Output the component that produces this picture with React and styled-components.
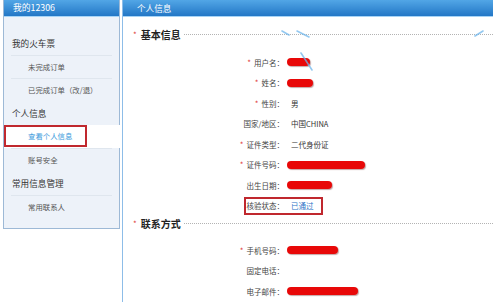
import React from 'react';
import styled, { createGlobalStyle } from 'styled-components';

const Global = createGlobalStyle`
  html, body { margin: 0; padding: 0; background: #fff; }
  body { font-family: "Noto Sans CJK SC", "Noto Sans", sans-serif; }
`;

const Page = styled.div`
  display: flex;
  align-items: flex-start;
  gap: 2px;
  padding-left: 3px;
  width: 493px;
  height: 302px;
  overflow: hidden;
  box-sizing: border-box;
`;

const Sidebar = styled.aside`
  width: 117px;
  box-sizing: border-box;
  border: 1px solid #9db9d6;
  border-top: none;
  background: #edf2f9;
  padding-bottom: 10px;
`;

const BlueBar = styled.div`
  height: 17px;
  box-sizing: border-box;
  background: linear-gradient(#52a6e6, #2377c6);
  border-bottom: 1px solid #a7d4f6;
  color: #fff;
  font-size: ${p => p.$size}px;
  line-height: 16px;
  padding-left: ${p => p.$pad}px;
  margin: 0 ${p => p.$edge || 0}px;
`;

const Nav = styled.nav`
  padding-top: 14px;
`;

const GroupTitle = styled.div`
  height: 24px;
  line-height: 24px;
  padding-left: 8px;
  font-size: 8.6px;
  color: #333;
`;

const SubItem = styled.div`
  height: 23px;
  line-height: 22px;
  margin: 0 7px;
  padding-left: 17px;
  border-top: 1px solid #dfe6ee;
  box-sizing: border-box;
  font-size: 7.4px;
  color: #555;
`;

const ActiveItem = styled.div`
  height: 23px;
  margin-right: -4px;
  background: #fff;
  display: flex;
  align-items: flex-start;
`;

const ActiveBox = styled.span`
  width: 83px;
  height: 22px;
  box-sizing: border-box;
  border: 2px solid #c0282e;
  padding-left: 22px;
  line-height: 18px;
  font-size: 7.4px;
  color: #3d9bdc;
`;

const Main = styled.main`
  flex: 1;
  height: 302px;
  border-left: 1px solid #8dbde8;
  position: relative;
`;

const SectionTitle = styled.div`
  display: flex;
  align-items: center;
  height: 16px;
  margin-top: ${p => p.$top}px;
  padding-left: 10px;
`;

const Star = styled.span`
  color: #e0403a;
  font-size: 8px;
  margin-right: ${p => p.$gap || 3}px;
`;

const TitleText = styled.span`
  font-size: 10px;
  font-weight: 700;
  color: #222;
`;

const Rule = styled.span`
  flex: 1;
  margin-left: 3px;
  border-top: 1px dotted #b3b3b3;
`;

const Form = styled.div`
  padding-top: ${p => p.$top}px;
`;

const Row = styled.div`
  position: relative;
  display: grid;
  grid-template-columns: 161px 1fr;
  align-items: center;
  height: 20.5px;
`;

const Label = styled.span`
  text-align: right;
  font-size: 7.5px;
  color: #444;
  white-space: nowrap;
`;

const Value = styled.span`
  display: flex;
  align-items: center;
  padding-left: 7px;
  font-size: 7.5px;
  color: #333;
  white-space: nowrap;
`;

const LinkValue = styled(Value)`
  color: #2d74c6;
`;

const Blob = styled.span`
  display: block;
  margin-left: -4px;
  height: 8px;
  border-radius: 5px;
  background: #e80808;
  box-shadow: 1px 1px 1px rgba(90, 0, 0, 0.35);
`;

const Annotation = styled.span`
  position: absolute;
  left: 121px;
  top: 1.5px;
  width: 79px;
  height: 18px;
  box-sizing: border-box;
  border: 2px solid #c0282e;
  pointer-events: none;
`;

const Scribbles = styled.svg`
  position: absolute;
  left: 0;
  top: 0;
  pointer-events: none;
`;

const basic = [
  { label: '用户名：', req: true, blob: 23 },
  { label: '姓名：', req: true, blob: 26 },
  { label: '性别：', req: true, value: '男' },
  { label: '国家/地区：', value: '中国CHINA' },
  { label: '证件类型：', req: true, value: '二代身份证' },
  { label: '证件号码：', req: true, blob: 78 },
  { label: '出生日期：', blob: 45 },
];

const contact = [
  { label: '手机号码：', req: true, blob: 51 },
  { label: '固定电话：' },
  { label: '电子邮件：', blob: 71 },
];

function FieldRow({ f }) {
  return (
    <Row>
      <Label>
        {f.req && <Star>*</Star>}
        {f.label}
      </Label>
      <Value>
        {f.blob ? <Blob style={{ width: f.blob }} /> : f.value}
      </Value>
    </Row>
  );
}

export default function App() {
  return (
    <>
      <Global />
      <Page>
        <Sidebar>
          <BlueBar $size={8.8} $pad={9}>我的12306</BlueBar>
          <Nav>
            <GroupTitle>我的火车票</GroupTitle>
            <SubItem>未完成订单</SubItem>
            <SubItem>已完成订单（改/退）</SubItem>
            <GroupTitle>个人信息</GroupTitle>
            <ActiveItem>
              <ActiveBox>查看个人信息</ActiveBox>
            </ActiveItem>
            <SubItem>账号安全</SubItem>
            <GroupTitle>常用信息管理</GroupTitle>
            <SubItem>常用联系人</SubItem>
          </Nav>
        </Sidebar>
        <Main>
          <BlueBar $size={8.6} $pad={14}>个人信息</BlueBar>
          <SectionTitle $top={9}>
            <Star $gap={4}>*</Star>
            <TitleText>基本信息</TitleText>
            <Rule />
          </SectionTitle>
          <Form $top={10}>
            {basic.map(f => <FieldRow key={f.label} f={f} />)}
            <Row>
              <Label>核验状态：</Label>
              <LinkValue>已通过</LinkValue>
              <Annotation />
            </Row>
          </Form>
          <SectionTitle $top={-1}>
            <Star $gap={4}>*</Star>
            <TitleText>联系方式</TitleText>
            <Rule />
          </SectionTitle>
          <Form $top={9}>
            {contact.map(f => <FieldRow key={f.label} f={f} />)}
          </Form>
          <Scribbles width="370" height="80" viewBox="0 0 370 80">
            <g stroke="#6fb6ec" strokeWidth="1.6" strokeLinecap="round" opacity="0.75" fill="none">
              <path d="M159 31 L166 35" />
              <path d="M174 31 L186 37" />
              <path d="M178 53 L189 70" />
              <path d="M352 36 L360 31" />
            </g>
          </Scribbles>
        </Main>
      </Page>
    </>
  );
}
